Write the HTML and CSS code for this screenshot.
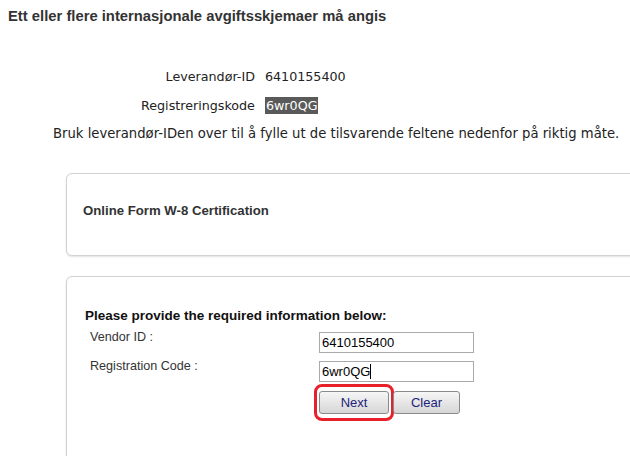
FILE: index.html
```html
<!DOCTYPE html>
<html lang="no">
<head>
<meta charset="utf-8">
<link rel="stylesheet" href="styles.css">
</head>
<body>
<h1 class="page-title">Ett eller flere internasjonale avgiftsskjemaer må angis</h1>
<div class="ids">
  <div class="ids-label">Leverandør-ID</div>
  <div class="ids-value">6410155400</div>
  <div class="ids-label">Registreringskode</div>
  <div class="ids-value"><span class="sel">6wr0QG</span></div>
</div>
<p class="hint">Bruk leverandør-IDen over til å fylle ut de tilsvarende feltene nedenfor på riktig måte.</p>
<div class="card card-title">
  <h2 class="card-heading">Online Form W-8 Certification</h2>
</div>
<div class="card card-form">
  <h3 class="form-heading">Please provide the required information below:</h3>
  <div class="form-grid">
    <label class="form-label">Vendor ID :</label>
    <div class="form-input">6410155400</div>
    <label class="form-label">Registration Code :</label>
    <div class="form-input">6wr0QG<span class="caret"></span></div>
    <div></div>
    <div class="buttons">
      <span class="btn btn-next">Next<span class="ring"></span></span>
      <span class="btn btn-clear">Clear</span>
    </div>
  </div>
</div>
</body>
</html>
```
FILE: styles.css
```css
html { overflow: hidden; }
body {
  margin: 8px;
  background: #fff;
  font-family: "Liberation Sans", Arial, sans-serif;
  color: #333;
  width: 640px;
}
.page-title {
  margin: 0;
  font-size: 14.8px;
  font-weight: bold;
  line-height: 17px;
  color: #333;
}
.ids {
  display: grid;
  grid-template-columns: auto auto;
  justify-content: start;
  column-gap: 10px;
  row-gap: 12px;
  margin: 43px 0 0 133px;
  font-family: "DejaVu Sans", Verdana, sans-serif;
  font-size: 12.7px;
  line-height: 17px;
  color: #222;
}
.ids-label { text-align: right; }
.sel {
  background: #5a5a5a;
  color: #fff;
  padding: 1px 1px;
}
.hint {
  margin: 11px 0 0 45px;
  font-family: "DejaVu Sans", Verdana, sans-serif;
  font-size: 13.2px;
  line-height: 17px;
  color: #222;
}
.card {
  margin-left: 58px;
  width: 600px;
  border: 1px solid #d2d2d2;
  border-radius: 6px;
  box-shadow: 0 1px 2px rgba(0,0,0,0.12);
  background: #fff;
  box-sizing: border-box;
}
.card-title {
  margin-top: 31px;
  height: 83px;
  padding: 29px 0 0 16px;
}
.card-heading {
  margin: 0;
  font-size: 13.2px;
  font-weight: bold;
  line-height: 15px;
  color: #333;
}
.card-form {
  margin-top: 20px;
  height: 200px;
  padding: 31px 0 0 18px;
}
.form-heading {
  margin: 0;
  font-size: 13.5px;
  font-weight: bold;
  line-height: 16px;
  color: #111;
}
.form-grid {
  display: grid;
  grid-template-columns: 234px 155px;
  row-gap: 8px;
  margin-top: 8px;
}
.form-label {
  padding-left: 5px;
  font-size: 12.6px;
  line-height: 11px;
  color: #333;
}
.form-input {
  height: 21px;
  box-sizing: border-box;
  border: 1px solid #aaa;
  font-size: 13px;
  line-height: 19px;
  padding-left: 2px;
  color: #000;
}
.caret {
  display: inline-block;
  width: 1px;
  height: 15px;
  background: #000;
  vertical-align: -3px;
}
.buttons {
  display: flex;
  gap: 4px;
  margin-top: 1px;
}
.btn {
  position: relative;
  height: 23px;
  box-sizing: border-box;
  border: 1px solid #8a8a8a;
  border-radius: 3px;
  background: linear-gradient(#f6f6f6, #e6e6e6 50%, #d6d6d6);
  color: #1d237a;
  font-size: 13px;
  line-height: 21px;
  text-align: center;
}
.btn-next { width: 70px; }
.btn-clear { width: 67px; }
.ring {
  position: absolute;
  left: -6px;
  top: -8px;
  width: 80px;
  height: 37px;
  box-sizing: border-box;
  border: 3px solid #e8202a;
  border-radius: 8px;
}
```
